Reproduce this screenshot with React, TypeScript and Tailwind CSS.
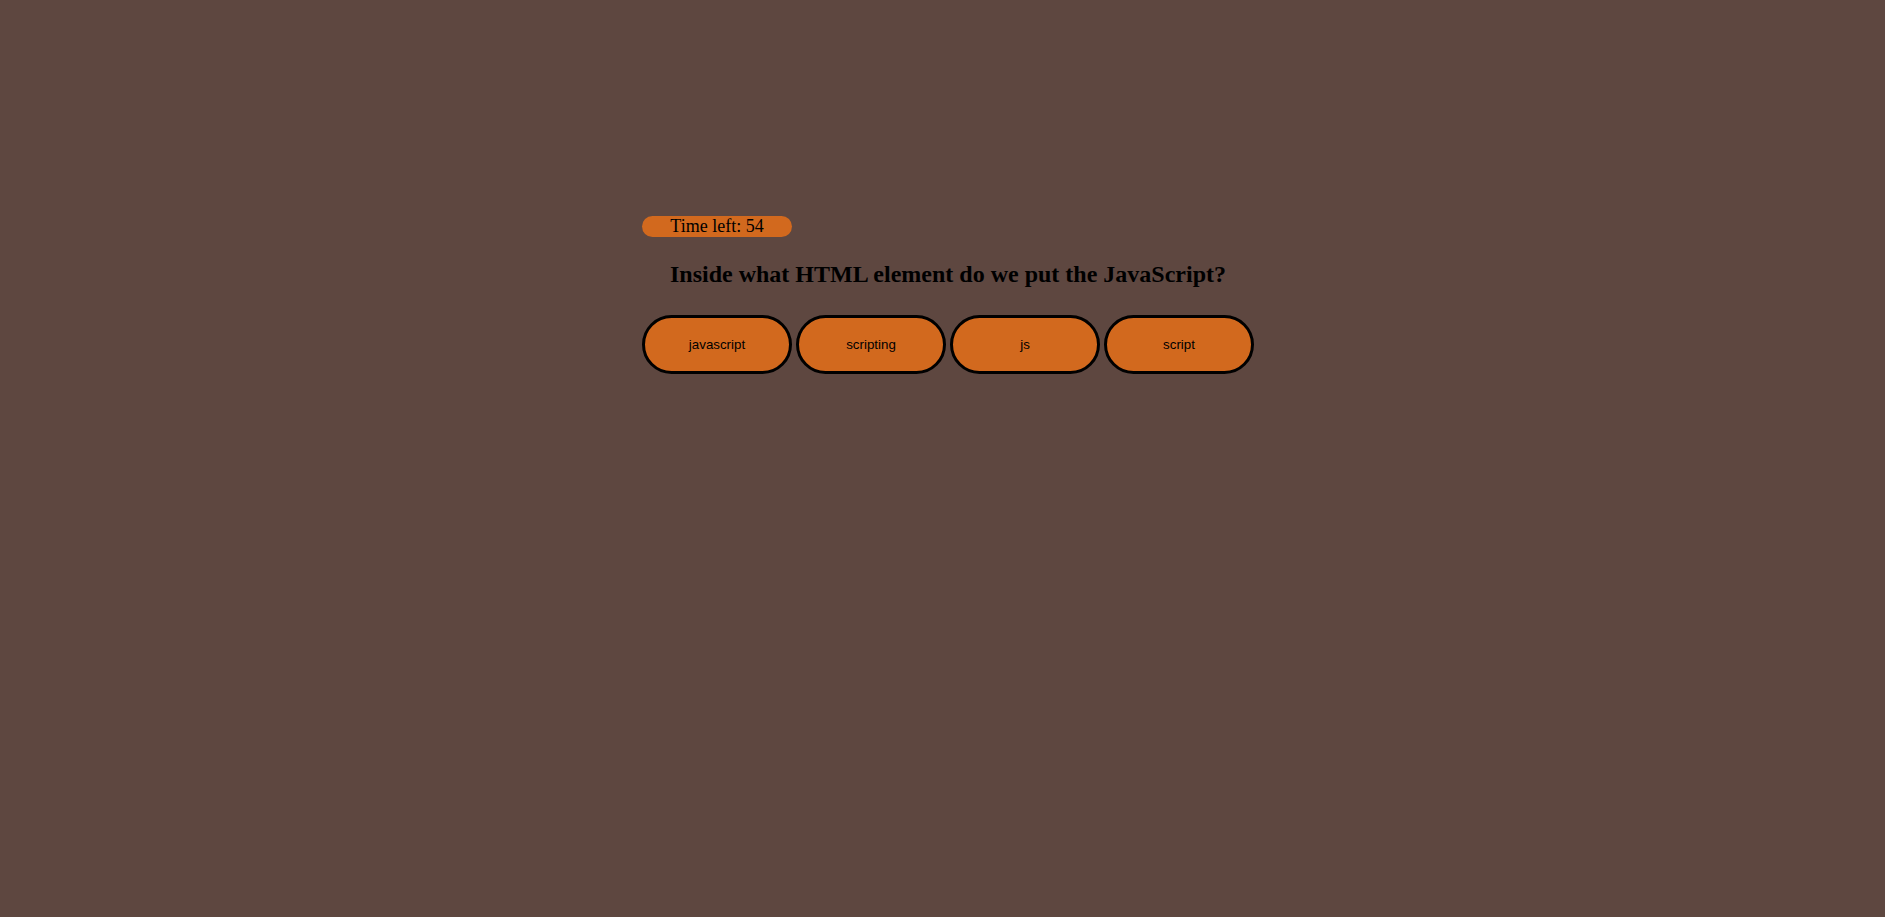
const answers = ["javascript", "scripting", "js", "script"];

export default function App() {
  return (
    <div className="min-h-screen w-full bg-[#5e4740] flex justify-center pl-[11px] pt-[216px]">
      <div className="w-[612px] flex flex-col items-start">
        {/* Timer */}
        <div className="w-[150px] h-[21px] rounded-full bg-[#d2691e] text-center text-black text-[18px] leading-[21px] font-['Liberation_Serif',serif]">
          Time left: 54
        </div>

        {/* Question */}
        <h2 className="w-full mt-[24px] text-center text-black text-[24px] leading-[27px] font-bold font-['Liberation_Serif',serif]">
          Inside what HTML element do we put the JavaScript?
        </h2>

        {/* Answers */}
        <div className="mt-[27px] flex gap-[4px]">
          {answers.map((a) => (
            <button
              key={a}
              className="w-[150px] h-[59px] rounded-full border-[3px] border-black bg-[#d2691e] text-black text-[13.333px] font-['Liberation_Sans',Arial,sans-serif] cursor-pointer"
            >
              {a}
            </button>
          ))}
        </div>
      </div>
    </div>
  );
}
